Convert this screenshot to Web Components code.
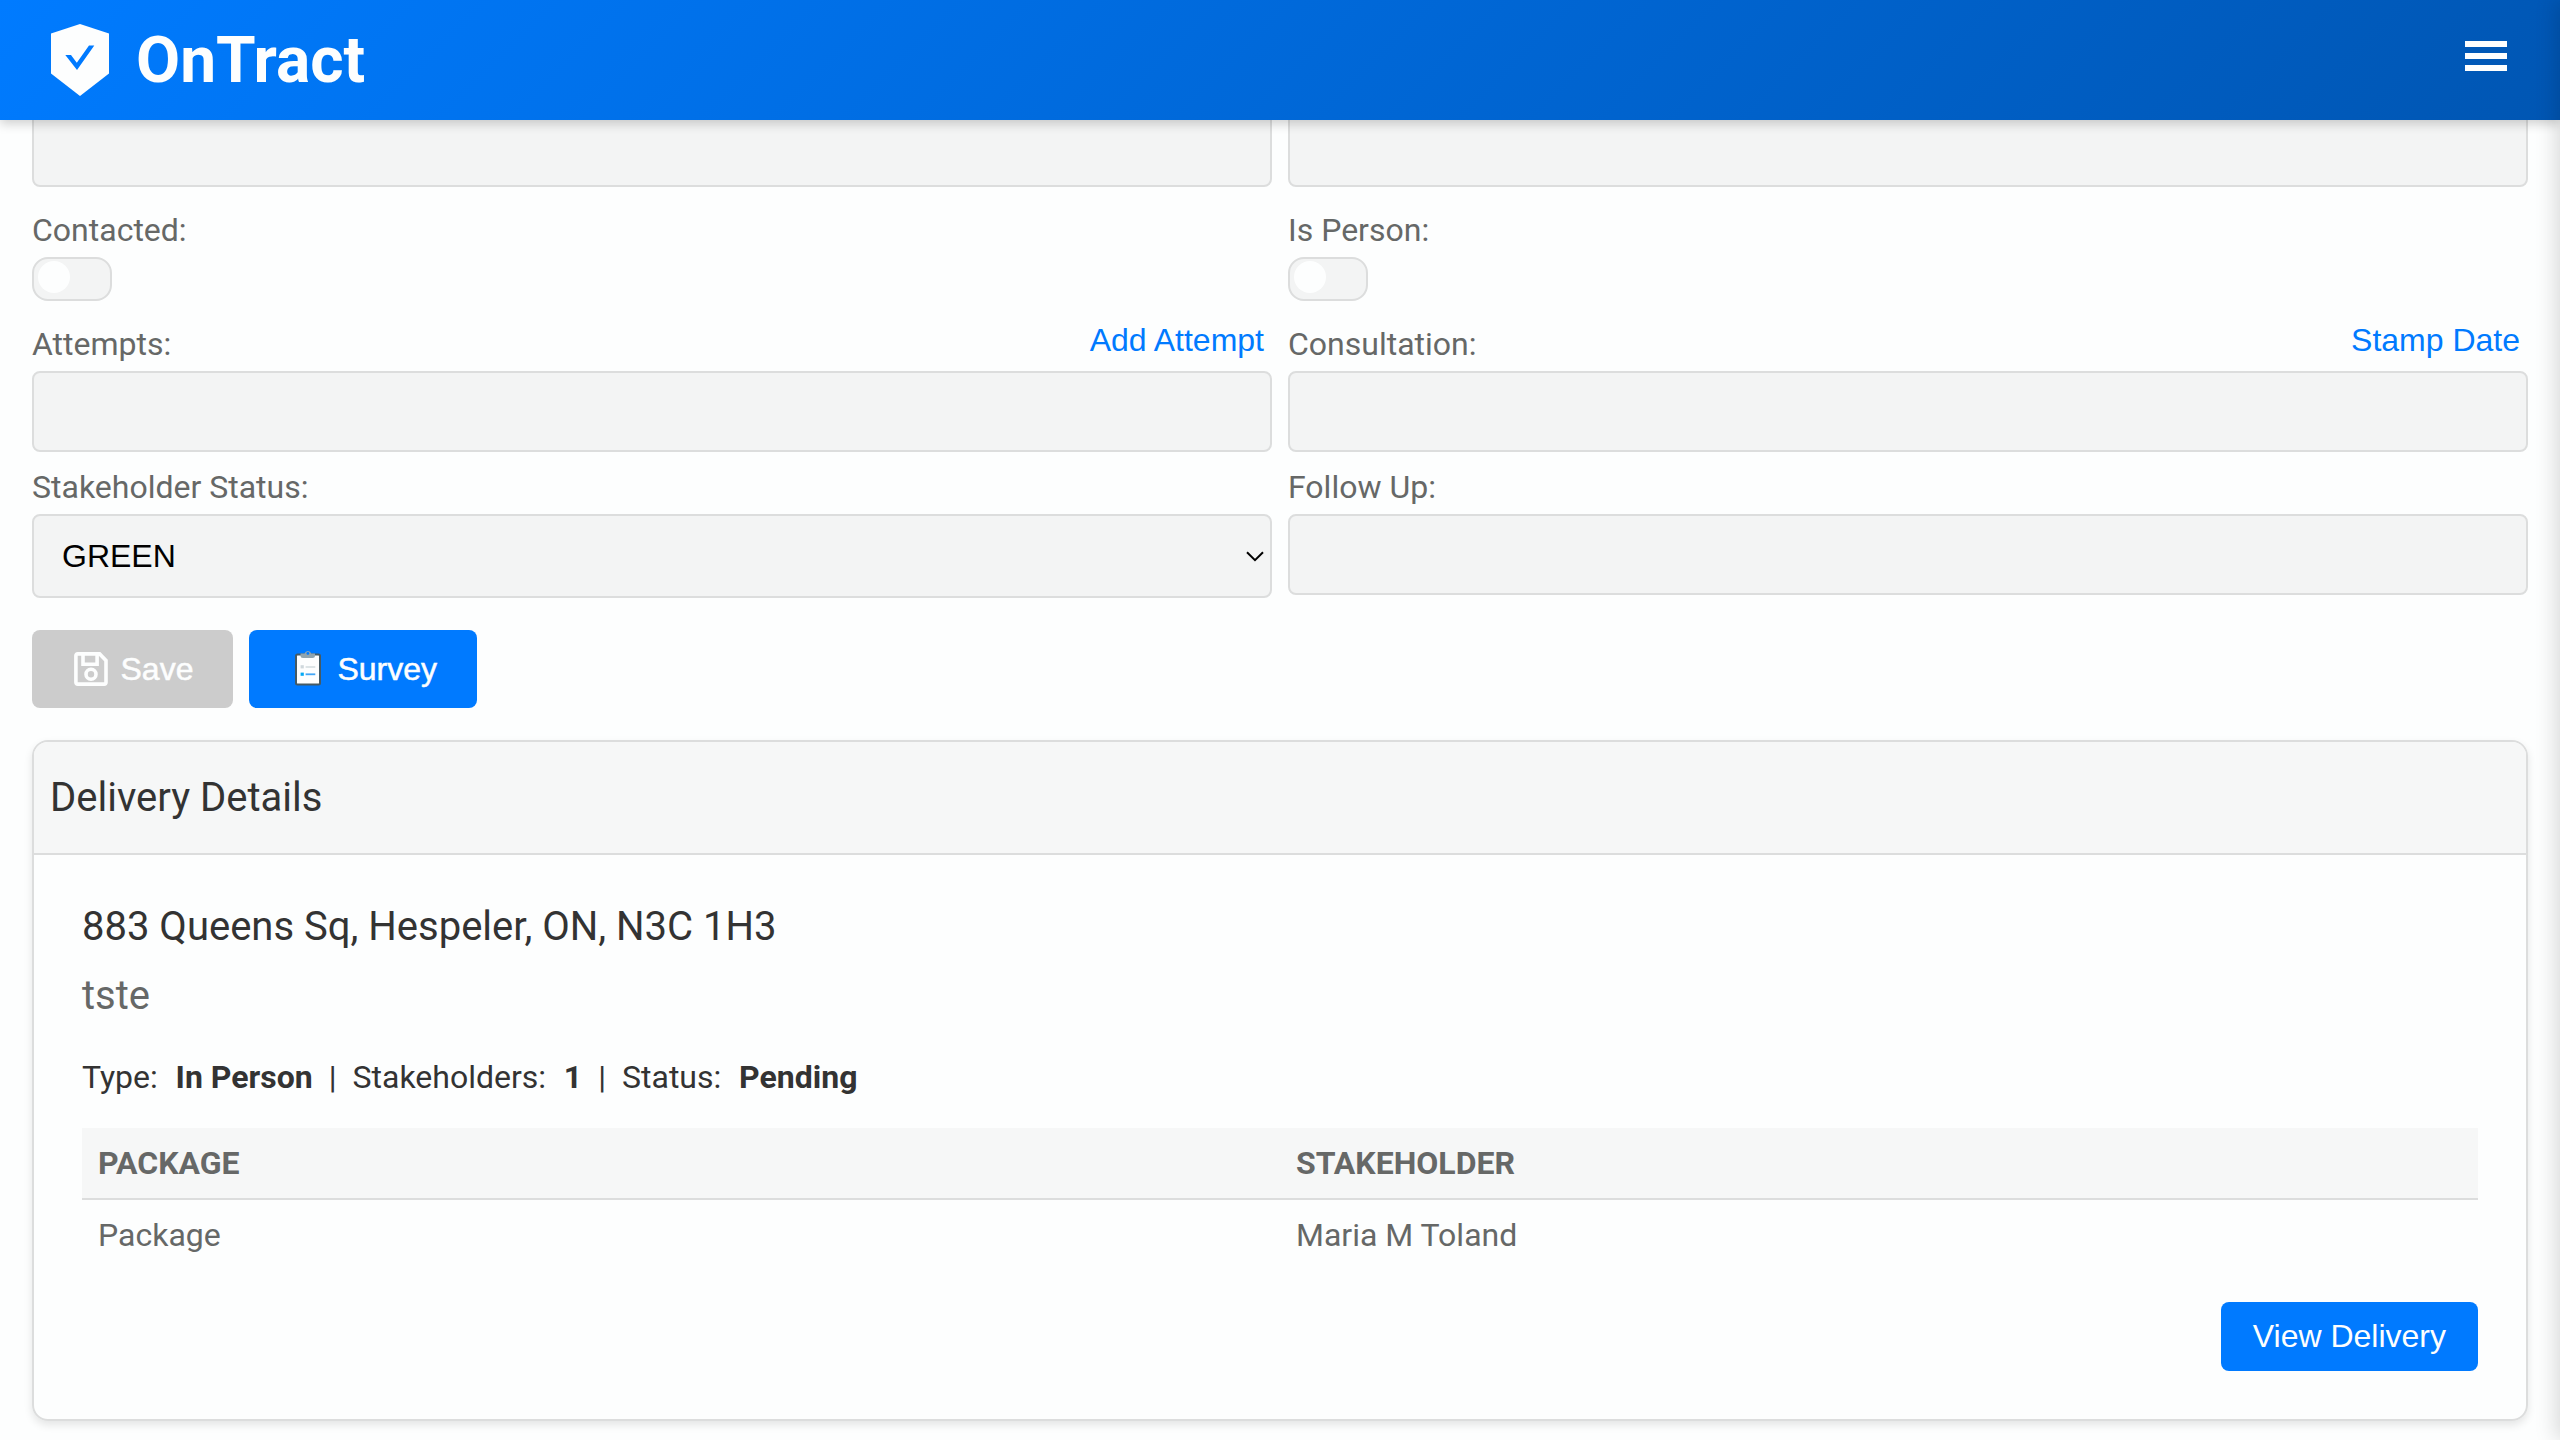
<!DOCTYPE html>
<html lang="en">
<head>
<meta charset="utf-8">
<title>OnTract</title>
<style>
html,body{margin:0;height:1440px;overflow:hidden;background:#fdfefe}
body{font-family:Roboto,sans-serif;font-size:32px;line-height:38px;color:#333}
</style>
</head>
<body>
<ot-app></ot-app>
<script>
function define(name, html) {
  const t = document.createElement('template');
  t.innerHTML = html;
  customElements.define(name, class extends HTMLElement {
    constructor() {
      super();
      this.attachShadow({ mode: 'open' }).append(t.content.cloneNode(true));
    }
  });
}

define('ot-header', `
<style>
:host{position:fixed;inset:0 0 auto 0;height:120px;z-index:5;box-sizing:border-box;padding:0 53px 0 51px;display:flex;align-items:center;justify-content:space-between;background:linear-gradient(135deg,#007bff,#0056b3);box-shadow:0 4px 10px rgba(0,0,0,.18);color:#fdfefe}
.brand{display:flex;align-items:center;gap:27px;font-size:64px;font-weight:700;line-height:76px}
.brand span{padding-top:2px}
svg{display:block}
.menu{margin-bottom:8px}
</style>
<div class="brand">
<svg width="58" height="72" viewBox="0 0 58 72"><path d="M29 0 58 9.5V49.5L29 72 0 49.5V9.5Z" fill="#fdfefe"/><path d="M14.3 31H20L25.8 38.7 38 21.4H43.3L26 46Z" fill="#007aff"/></svg>
<span>OnTract</span></div>
<svg class="menu" width="42" height="30" viewBox="0 0 42 30" fill="#fdfefe"><path d="M0 0H42V6H0ZM0 12H42V18H0ZM0 24H42V30H0Z"/></svg>`);

define('ot-field', `
<style>
:host{display:flex;flex-direction:column;gap:8px;min-width:0;color:#666867}
.top{display:flex;justify-content:space-between;align-items:flex-start;height:38px}
</style>
<div class="top"><slot name="label"></slot><slot name="action"></slot></div>
<slot></slot>`);

define('ot-link', `
<style>:host{display:block;font-family:"Liberation Sans",Arial,sans-serif;line-height:37px;margin:-3px 8px 0 0;color:#007aff}</style><slot></slot>`);

define('ot-input', `
<style>:host{display:block;height:81px;box-sizing:border-box;background:#f3f4f4;border:2px solid #dcdddd;border-radius:8px}</style>`);

define('ot-select', `
<style>
:host{display:flex;align-items:center;justify-content:space-between;height:84px;box-sizing:border-box;padding:0 6px 0 28px;background:#f3f4f4;border:2px solid #dcdddd;border-radius:8px;font-family:"Liberation Sans",Arial,sans-serif;line-height:36px;color:#000}
</style>
<slot></slot><svg width="18" height="11" viewBox="0 0 18 11"><path d="M1 1.2 9 9.2 17 1.2" fill="none" stroke="#000" stroke-width="2"/></svg>`);

define('ot-toggle', `
<style>
:host{display:block;width:80px;height:44px;box-sizing:border-box;padding:2px 0 0 4px;background:#f3f4f4;border:2px solid #dcdddd;border-radius:16px}
i{display:block;width:32px;height:32px;border-radius:50%;background:#fdfefe}
</style><i></i>`);

define('ot-button', `
<style>
:host{display:flex;align-items:center;box-sizing:border-box;height:78px;padding:0 39.5px 0 40px;border-radius:8px;background:#007aff;color:#fdfefe;font-family:"Liberation Sans",Arial,sans-serif;line-height:37px;white-space:nowrap;-webkit-text-stroke:.5px currentColor}
:host([disabled]){background:#ccc;padding-right:40px}
:host([compact]){height:69px;padding:0 32px;-webkit-text-stroke:0}
</style><slot name="icon"></slot><slot></slot>`);

define('ot-icon-save', `
<style>:host{display:block;width:34px;height:34px;margin:0 12.5px 0 2px}svg{display:block}</style>
<svg width="34" height="34" viewBox="0 0 34 34" fill="none" stroke="#fdfefe" stroke-width="3.6"><path d="M3.8 1.9H25.6L32 8.5V30.2Q32 32.1 30.1 32.1H3.8Q1.9 32.1 1.9 30.2V3.8Q1.9 1.9 3.8 1.9Z"/><path d="M9 2V12.3H23.1V2"/><circle cx="17" cy="22.2" r="5"/></svg>`);

define('ot-icon-survey', `
<style>:host{display:block;width:26px;height:36px;margin:0 16px 2px 6px}svg{display:block}</style>
<svg width="26" height="36" viewBox="0 0 26 36"><rect x="1" y="4.4" width="24" height="30" rx="1.5" fill="#fdfefe" stroke="#455a64" stroke-width="2"/><path d="M5.5 3.6H9.6A3.4 3.4 0 0 1 16.2 3.6H20V5.5Q20 8 17.5 8H8Q5.5 8 5.5 5.5Z" fill="#90a4ae"/><circle cx="12.9" cy="3.4" r="1.4" fill="#007aff"/><rect x="5.6" y="15.2" width="3.2" height="3.2" fill="#cfd8dc"/><path d="M10.6 17H20.3" stroke="#cfd8dc" stroke-width="1.4"/><rect x="5.6" y="22.6" width="3.2" height="3.2" fill="#03a9f4"/><path d="M10.6 24.3H20.3" stroke="#42a5f5" stroke-width="1.8"/></svg>`);

define('ot-card', `
<style>
:host{display:block;box-sizing:border-box;height:681px;border:2px solid #dcdddd;border-radius:16px;overflow:hidden;box-shadow:0 4px 8px rgba(0,0,0,.1)}
header{box-sizing:border-box;height:113px;padding:0 16px;display:flex;align-items:center;background:#f6f7f7;border-bottom:2px solid #dcdddd;font-size:40px;line-height:47px}
section{display:flex;flex-direction:column;padding:48px 48px 0}
</style>
<header><slot name="title"></slot></header><section><slot></slot></section>`);

define('ot-delivery', `
<style>
:host{display:flex;flex-direction:column}
.addr,.note{font-size:40px;line-height:47px}
.note{color:#666867;margin-top:22px}
.meta{display:flex;gap:16px;margin-top:39px}
b{font-weight:700;margin-left:1.8px}
</style>
<div class="addr"><slot name="address"></slot></div>
<div class="note"><slot name="note"></slot></div>
<div class="meta"><span>Type:</span><b><slot name="type"></slot></b><span>|</span><span>Stakeholders:</span><b><slot name="count"></slot></b><span>|</span><span>Status:</span><b><slot name="status"></slot></b></div>`);

define('ot-table', `
<style>
:host{display:block;margin-top:32px;color:#666867}
.row{display:grid;grid-template-columns:1fr 1fr;box-sizing:border-box;height:72px;align-items:center;padding-bottom:2px}
.row>*{padding-left:16px}
.head{padding-bottom:0;background:#f6f7f7;border-bottom:2px solid #dcdddd;font-weight:700}
</style>
<div class="row head"><span>PACKAGE</span><span>STAKEHOLDER</span></div>
<div class="row"><span><slot name="package"></slot></span><span><slot name="holder"></slot></span></div>`);

define('ot-side-panel', `
<style>:host{position:fixed;top:0;bottom:0;left:100%;width:500px;z-index:6;box-shadow:-4px 0 20px rgba(0,0,0,.15)}</style>`);

define('ot-app', `
<style>
:host{display:block}
main{display:flex;flex-direction:column;padding:106px 32px 0}
.row{display:grid;grid-template-columns:1fr 1fr;gap:16px;align-items:start}
.gap{margin-top:24px}
.near{margin-top:16px}
.buttons{display:flex;gap:16px;margin:32px 0}
.end{display:flex;justify-content:flex-end;margin-top:30px}
</style>
<ot-header></ot-header>
<main>
<div class="row"><ot-input></ot-input><ot-input></ot-input></div>
<div class="row gap">
<ot-field><span slot="label">Contacted:</span><ot-toggle></ot-toggle></ot-field>
<ot-field><span slot="label">Is Person:</span><ot-toggle></ot-toggle></ot-field>
</div>
<div class="row gap">
<ot-field><span slot="label">Attempts:</span><ot-link slot="action">Add Attempt</ot-link><ot-input></ot-input></ot-field>
<ot-field><span slot="label">Consultation:</span><ot-link slot="action">Stamp Date</ot-link><ot-input></ot-input></ot-field>
</div>
<div class="row near">
<ot-field><span slot="label">Stakeholder Status:</span><ot-select>GREEN</ot-select></ot-field>
<ot-field><span slot="label">Follow Up:</span><ot-input></ot-input></ot-field>
</div>
<div class="buttons">
<ot-button disabled><ot-icon-save slot="icon"></ot-icon-save>Save</ot-button>
<ot-button><ot-icon-survey slot="icon"></ot-icon-survey>Survey</ot-button>
</div>
<ot-card>
<span slot="title">Delivery Details</span>
<ot-delivery>
<span slot="address">883 Queens Sq, Hespeler, ON, N3C 1H3</span>
<span slot="note">tste</span>
<span slot="type">In Person</span><span slot="count">1</span><span slot="status">Pending</span>
</ot-delivery>
<ot-table><span slot="package">Package</span><span slot="holder">Maria M Toland</span></ot-table>
<div class="end"><ot-button compact>View Delivery</ot-button></div>
</ot-card>
</main>
<ot-side-panel></ot-side-panel>`);
</script>
</body>
</html>
